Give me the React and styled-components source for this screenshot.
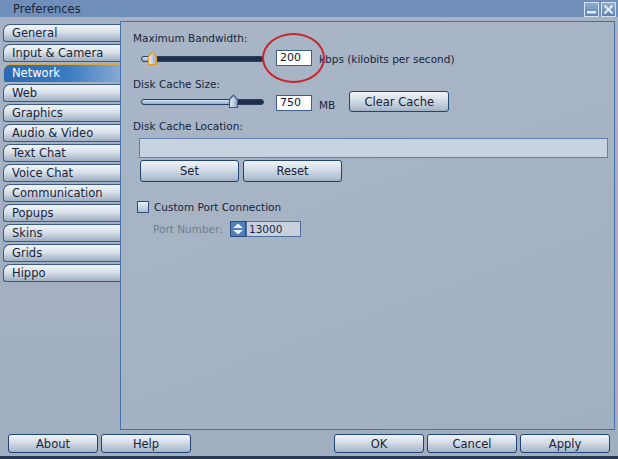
import styled, { createGlobalStyle } from "styled-components";

const GlobalStyle = createGlobalStyle`
  html, body {
    margin: 0;
    padding: 0;
    background: #a3b0c2;
  }
  * {
    box-sizing: border-box;
  }
`;

const TABS = [
  "General",
  "Input & Camera",
  "Network",
  "Web",
  "Graphics",
  "Audio & Video",
  "Text Chat",
  "Voice Chat",
  "Communication",
  "Popups",
  "Skins",
  "Grids",
  "Hippo",
];

const Thumb = ({ focused }) => (
  <svg width="11" height="15" viewBox="0 0 11 15">
    <defs>
      <linearGradient id={focused ? "thf" : "thn"} x1="0" y1="0" x2="1" y2="0">
        <stop offset="0" stopColor="#e9f0f8" />
        <stop offset="1" stopColor="#8fa8c6" />
      </linearGradient>
    </defs>
    <path
      d="M1.5 5.5 L5.5 1.2 L9.5 5.5 V13.5 H1.5 Z"
      fill={`url(#${focused ? "thf" : "thn"})`}
      stroke={focused ? "#e29a1c" : "#3d5a80"}
      strokeWidth="1.2"
    />
  </svg>
);

const Slider = ({ pos, focused }) => (
  <SliderTrack>
    <SliderFill style={{ width: pos }} />
    <ThumbHolder style={{ left: pos - 5 }}>
      <Thumb focused={focused} />
    </ThumbHolder>
  </SliderTrack>
);

const App = () => {
  return (
    <>
      <GlobalStyle />
      <Window>
        <TitleBar>
          <Title>Preferences</Title>
          <WinButtons>
            <WinButton>
              <svg width="13" height="13" viewBox="0 0 13 13">
                <rect x="2" y="8" width="9" height="2.5" fill="#e4ecf5" />
              </svg>
            </WinButton>
            <WinButton>
              <svg width="13" height="13" viewBox="0 0 13 13">
                <path d="M2.5 2.5 L10.5 10.5 M10.5 2.5 L2.5 10.5" stroke="#e4ecf5" strokeWidth="2.2" />
              </svg>
            </WinButton>
          </WinButtons>
        </TitleBar>

        <Main>
          <Sidebar>
            {TABS.map((t) => (
              <Tab key={t} $active={t === "Network"}>
                {t}
              </Tab>
            ))}
          </Sidebar>

          <Panel>
            <Label $top={10}>Maximum Bandwidth:</Label>
            <Row $top={5} $h={17}>
              <SliderSlot>
                <Slider pos={10} focused />
              </SliderSlot>
              <NumField>200</NumField>
              <Unit>kbps (kilobits per second)</Unit>
              <Annotation />
            </Row>

            <Label $top={11}>Disk Cache Size:</Label>
            <Row $top={0} $h={22}>
              <SliderSlot>
                <Slider pos={91} />
              </SliderSlot>
              <NumField $top={4}>750</NumField>
              <Unit>MB</Unit>
              <Button $w={100} $h={21} $ml={14}>Clear Cache</Button>
            </Row>

            <Label $top={7}>Disk Cache Location:</Label>
            <PathField />
            <Row $top={2} $h={21} $ml={7} $gap={4}>
              <Button $w={99} $h={22}>Set</Button>
              <Button $w={99} $h={22}>Reset</Button>
            </Row>

            <CheckRow>
              <CheckBox />
              <span>Custom Port Connection</span>
            </CheckRow>
            <PortRow>
              <Dim>Port Number:</Dim>
              <Spinner>
                <svg width="16" height="16" viewBox="0 0 16 16">
                  <rect x="0.5" y="0.5" width="15" height="15" fill="#4f7fbd" stroke="#2c4e7e" />
                  <path d="M3 7 L8 2.5 L13 7 Z" fill="#e8eff8" />
                  <path d="M3 9 L8 13.5 L13 9 Z" fill="#e8eff8" />
                </svg>
              </Spinner>
              <PortField>13000</PortField>
            </PortRow>
          </Panel>
        </Main>

        <Footer>
          <Button $w={90} $h={19}>About</Button>
          <Button $w={90} $h={19}>Help</Button>
          <Spacer />
          <Button $w={90} $h={19}>OK</Button>
          <Button $w={90} $h={19}>Cancel</Button>
          <Button $w={90} $h={19}>Apply</Button>
        </Footer>
      </Window>
    </>
  );
};

const Window = styled.div`
  width: 618px;
  height: 459px;
  display: flex;
  flex-direction: column;
  background: linear-gradient(180deg, #a7b3c4 0%, #a1aec0 100%);
  border-bottom: 3px solid #273851;
  font-family: "DejaVu Sans", "Liberation Sans", sans-serif;
  font-size: 10.5px;
  color: #17243a;
  overflow: hidden;
`;

const TitleBar = styled.div`
  height: 17px;
  display: flex;
  align-items: center;
  justify-content: space-between;
  background: #6f8fba;
  padding: 0 2px 0 13px;
`;

const Title = styled.div`
  font-size: 11.5px;
  color: #1a2538;
`;

const WinButtons = styled.div`
  display: flex;
  gap: 2px;
  margin-top: 1px;
`;

const WinButton = styled.div`
  width: 15px;
  height: 15px;
  border: 1px solid #d4e0ee;
  background: linear-gradient(180deg, #8eacd2, #5c82b6);
  display: flex;
  align-items: center;
  justify-content: center;
`;

const Main = styled.div`
  display: flex;
  height: 413px;
  padding-top: 4px;
`;

const Sidebar = styled.div`
  width: 120px;
  padding: 3px 0 0 3px;
  display: flex;
  flex-direction: column;
  gap: 2px;
`;

const Tab = styled.div`
  height: 18px;
  line-height: 17px;
  padding-left: 8px;
  font-size: 11.5px;
  border: 1px solid #3b5b86;
  border-right: none;
  border-radius: 7px 0 0 3px;
  color: ${(p) => (p.$active ? "#ffffff" : "#17243a")};
  background: ${(p) =>
    p.$active
      ? "linear-gradient(90deg, #2b69b3 0%, #3b7bc3 55%, #86a9d2 100%)"
      : "linear-gradient(180deg, #f2f5f9 0%, #d8e0ea 45%, #b4c1d1 80%, #9dadc2 100%)"};
  ${(p) => p.$active && "border-color: #d9a640 transparent transparent #d9a640;"}
`;

const Panel = styled.div`
  flex: 1;
  margin-right: 3px;
  border: 1px solid #4672aa;
  background: linear-gradient(160deg, #a9b6c7 0%, #a5b2c4 60%, #a2afc1 100%);
  padding-left: 12px;
  display: flex;
  flex-direction: column;
`;

const Label = styled.div`
  margin-top: ${(p) => p.$top}px;
  height: 13px;
  line-height: 13px;
`;

const Row = styled.div`
  position: relative;
  margin-top: ${(p) => p.$top}px;
  margin-left: ${(p) => p.$ml || 0}px;
  height: ${(p) => p.$h}px;
  display: flex;
  align-items: flex-start;
  gap: ${(p) => p.$gap || 0}px;
`;

const SliderSlot = styled.div`
  width: 143px;
  height: 100%;
  display: flex;
  align-items: center;
  padding-left: 8px;
`;

const SliderTrack = styled.div`
  position: relative;
  width: 123px;
  height: 6px;
  border-radius: 3px;
  background: #1e2f4c;
  border: 1px solid #2a3f62;
`;

const SliderFill = styled.div`
  height: 100%;
  border-radius: 3px 0 0 3px;
  background: linear-gradient(180deg, #d6e6f6, #86acd6);
`;

const ThumbHolder = styled.div`
  position: absolute;
  top: -6px;
  width: 11px;
  height: 15px;
  display: flex;
`;

const NumField = styled.div`
  width: 36px;
  height: 16px;
  margin-top: ${(p) => p.$top || 0}px;
  background: #ffffff;
  border: 1px solid #3d5f8c;
  padding-left: 3px;
  line-height: 14px;
  font-size: 11px;
  color: #101a2c;
`;

const Unit = styled.div`
  margin-left: 7px;
  align-self: flex-end;
  line-height: 13px;
  margin-bottom: 1px;
`;

const Annotation = styled.div`
  position: absolute;
  left: 129px;
  top: -17px;
  width: 63px;
  height: 50px;
  border: 2px solid #c8262a;
  border-radius: 50%;
  pointer-events: none;
`;

const Button = styled.div`
  width: ${(p) => p.$w}px;
  height: ${(p) => p.$h}px;
  margin-left: ${(p) => p.$ml || 0}px;
  flex-shrink: 0;
  display: flex;
  align-items: center;
  justify-content: center;
  font-size: 11.5px;
  color: #17243a;
  border: 1px solid #1f4475;
  border-radius: 3px;
  background: linear-gradient(180deg, #f1f4f8 0%, #d6dee8 40%, #b2c0d1 85%, #9fb0c5 100%);
`;

const PathField = styled.div`
  margin: 5px 6px 0 6px;
  height: 20px;
  border: 1px solid #5e80aa;
  background: #c9d3df;
`;

const CheckRow = styled.div`
  margin-top: 19px;
  margin-left: 4px;
  height: 14px;
  display: flex;
  align-items: center;
  gap: 5px;
`;

const CheckBox = styled.div`
  width: 12px;
  height: 12px;
  border: 1px solid #304d76;
  background: linear-gradient(180deg, #e9eff6, #a9bdd6);
`;

const PortRow = styled.div`
  margin-top: 6px;
  margin-left: 20px;
  height: 17px;
  display: flex;
  align-items: center;
`;

const Dim = styled.span`
  color: #6e7d92;
  width: 77px;
`;

const Spinner = styled.div`
  width: 16px;
  height: 16px;
  display: flex;
`;

const PortField = styled.div`
  width: 55px;
  height: 16px;
  border: 1px solid #4d6f9c;
  background: #c7d1dd;
  padding-left: 2px;
  line-height: 14px;
  color: #1c2840;
`;

const Footer = styled.div`
  display: flex;
  gap: 3px;
  padding: 4px 8px 0 8px;
`;

const Spacer = styled.div`
  flex: 1;
`;

export default App;
